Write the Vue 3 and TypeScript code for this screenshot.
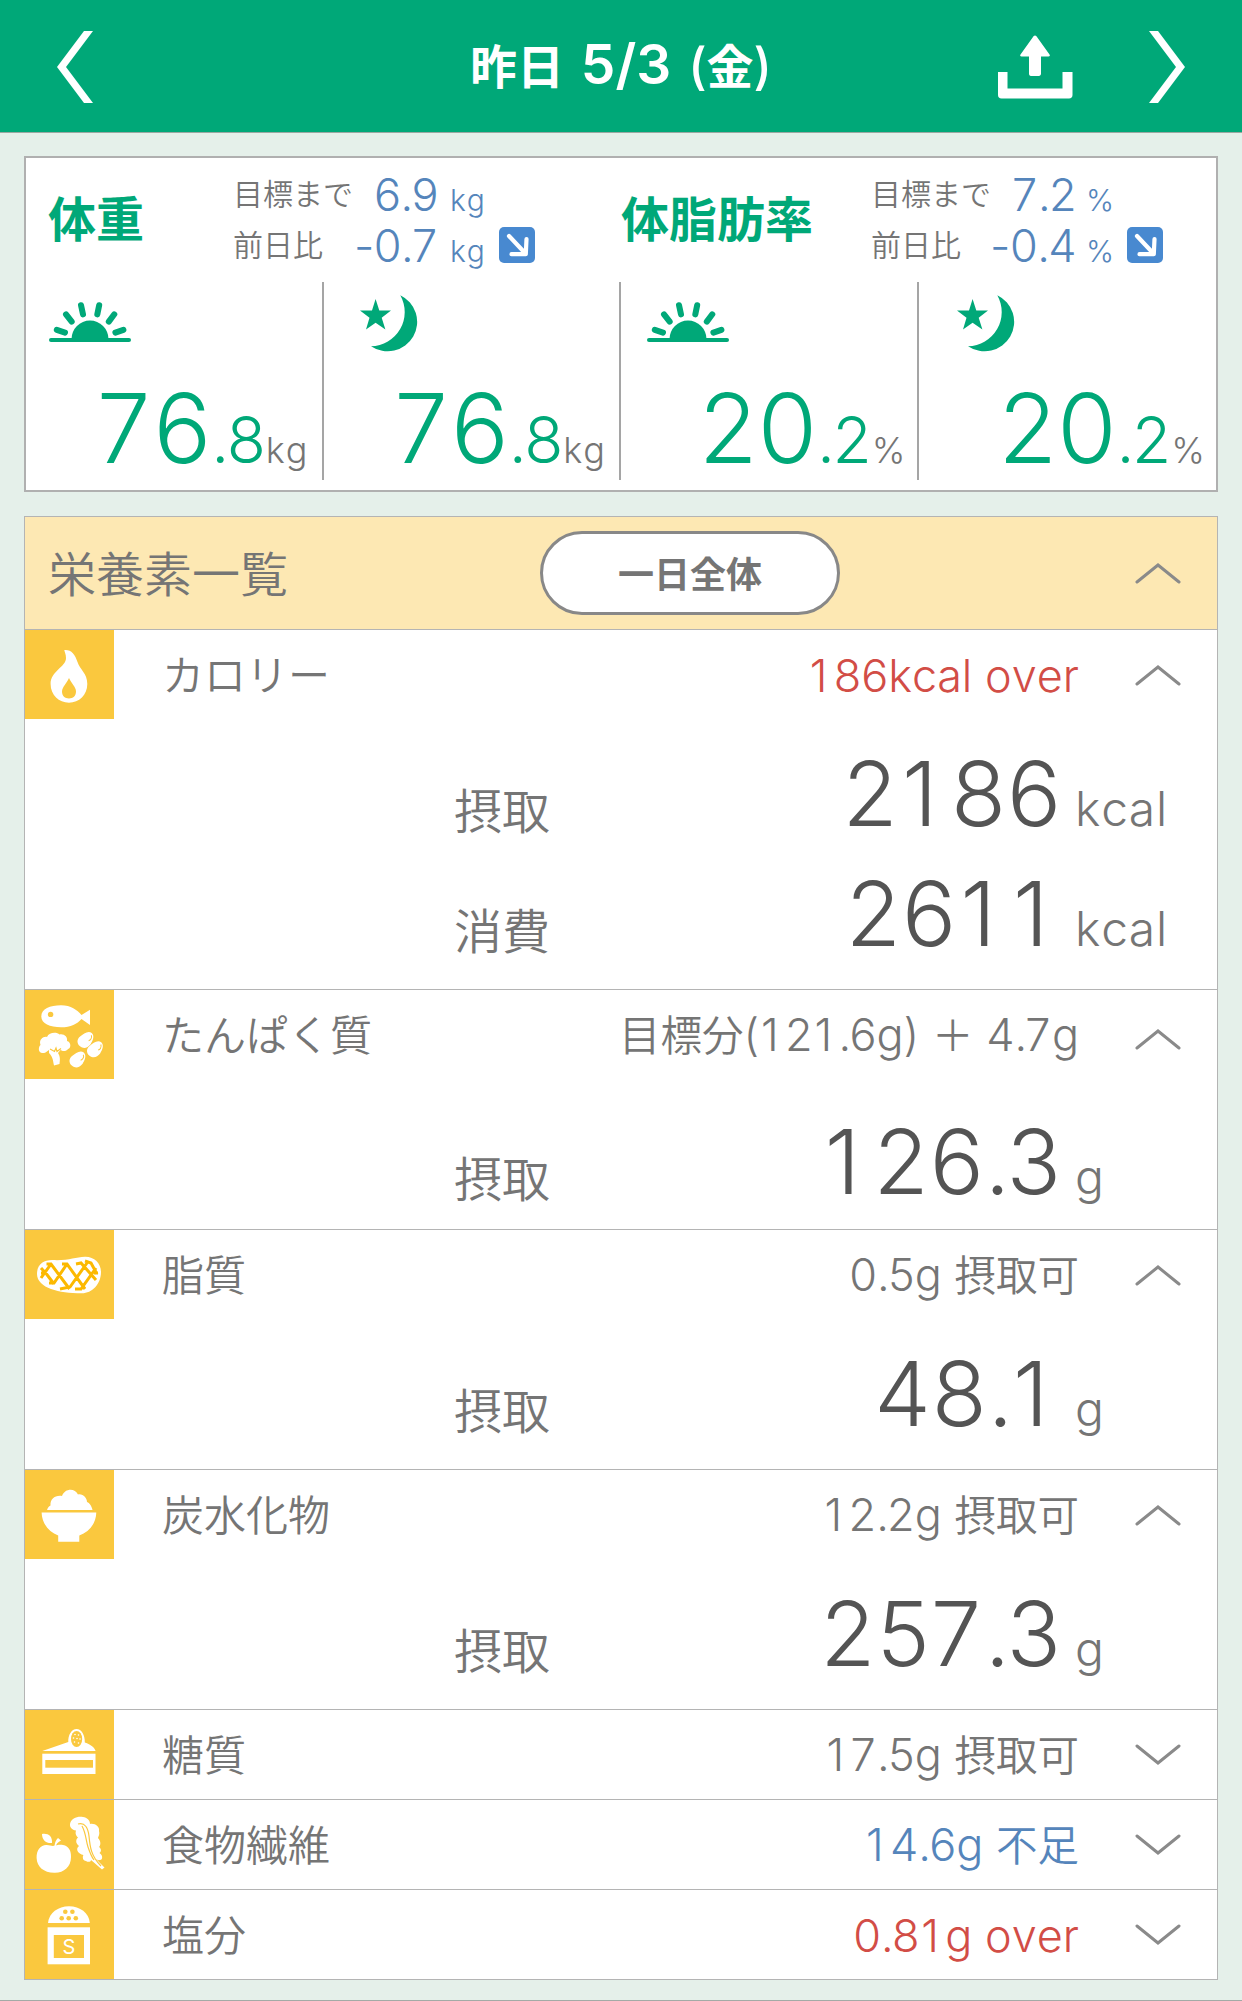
<script setup lang="ts">
interface Metric {
  title: string
  unit: string
  goal: string
  diff: string
  whole: string
  fraction: string
}

interface Intake {
  label: string
  amount: string
  unit: string
}

interface Nutrient {
  icon: string
  name: string
  status: string
  tone: 'plain' | 'over' | 'short'
  open: boolean
  lines: Intake[]
}

interface Run {
  text: string
  kind: 'dot' | 'one' | 'seven' | 'latin' | 'kanji'
}

// Splits a value so points, narrow digits and kanji can be spaced and sized on their own.
function runs(value: string): Run[] {
  const parts = value.match(/[.17]|[\x20-\x2d\x2f\x30\x32-\x36\x38-\x7e]+|[^\x20-\x7e]+/g) ?? []
  return parts.map((text) => {
    if (text === '.') return { text, kind: 'dot' }
    if (text === '1') return { text, kind: 'one' }
    if (text === '7') return { text, kind: 'seven' }
    return { text, kind: /^[\x20-\x7e]/.test(text) ? 'latin' : 'kanji' }
  })
}

const metrics: Metric[] = [
  { title: '体重', unit: 'kg', goal: '6.9', diff: '-0.7', whole: '76', fraction: '.8' },
  { title: '体脂肪率', unit: '%', goal: '7.2', diff: '-0.4', whole: '20', fraction: '.2' },
]

const nutrients: Nutrient[] = [
  {
    icon: 'flame', name: 'カロリー', status: '186kcal over', tone: 'over', open: true,
    lines: [
      { label: '摂取', amount: '2186', unit: 'kcal' },
      { label: '消費', amount: '2611', unit: 'kcal' },
    ],
  },
  { icon: 'protein', name: 'たんぱく質', status: '目標分(121.6g) ＋ 4.7g', tone: 'plain', open: true, lines: [{ label: '摂取', amount: '126.3', unit: 'g' }] },
  { icon: 'fat', name: '脂質', status: '0.5g 摂取可', tone: 'plain', open: true, lines: [{ label: '摂取', amount: '48.1', unit: 'g' }] },
  { icon: 'rice', name: '炭水化物', status: '12.2g 摂取可', tone: 'plain', open: true, lines: [{ label: '摂取', amount: '257.3', unit: 'g' }] },
  { icon: 'cake', name: '糖質', status: '17.5g 摂取可', tone: 'plain', open: false, lines: [] },
  { icon: 'fiber', name: '食物繊維', status: '14.6g 不足', tone: 'short', open: false, lines: [] },
  { icon: 'salt', name: '塩分', status: '0.81g over', tone: 'over', open: false, lines: [] },
]
</script>

<template>
  <div class="page">
    <header class="topbar">
      <svg class="prev" width="36" height="72" viewBox="0 0 36 72"><path d="M27 0H36L9 36L36 72H27L0 36Z" fill="#fff" /></svg>
      <h1 class="date">昨日 <span class="date-num">5/3</span> <span class="paren">(</span>金<span class="paren">)</span></h1>
      <div class="actions">
        <svg class="share" width="76" height="64" viewBox="0 0 76 64">
          <path d="M38 0.5C39 0.5 39.6 1.4 40 2L52.5 19.5C53.3 20.8 52.6 21.5 51.5 21.5H44V38.5C44 40 43.2 41 41.8 41H34C32.6 41 32 40 32 38.5V21.5H24.5C23.4 21.5 22.7 20.8 23.5 19.5L36 2C36.4 1.4 37 0.5 38 0.5Z" fill="#fff" />
          <path d="M1 37H10.5V53.5H65.5V37H75.5V60C75.5 62 74.3 63.5 72 63.5H4.5C2.2 63.5 1 62 1 60Z" fill="#fff" />
        </svg>
        <svg class="next" width="36" height="72" viewBox="0 0 36 72"><path d="M9 0H0L27 36L0 72H9L36 36Z" fill="#fff" /></svg>
      </div>
    </header>

    <main>
      <section class="summary">
        <div v-for="metric in metrics" :key="metric.title" class="metric">
          <div class="metric-head">
            <h2 class="metric-title">{{ metric.title }}</h2>
            <div class="deltas">
              <div class="delta">
                <span class="delta-label">目標まで</span>
                <span class="delta-value"><span v-for="(run, i) in runs(metric.goal)" :key="i" :class="run.kind">{{ run.text }}</span></span>
                <span class="delta-unit" :class="{ percent: metric.unit === '%' }">{{ metric.unit }}</span>
              </div>
              <div class="delta">
                <span class="delta-label">前日比</span>
                <span class="delta-value"><span v-for="(run, i) in runs(metric.diff)" :key="i" :class="run.kind">{{ run.text }}</span></span>
                <span class="delta-unit" :class="{ percent: metric.unit === '%' }">{{ metric.unit }}</span>
                <svg class="trend" width="36" height="36" viewBox="0 0 36 36">
                  <rect width="36" height="36" rx="5" fill="#4889d0" />
                  <path d="M10 9L26 26M27.5 12L26.8 27.2L12.5 27.2" fill="none" stroke="#fff" stroke-width="4.2" stroke-linecap="round" stroke-linejoin="round" />
                </svg>
              </div>
            </div>
          </div>
          <div class="readings">
            <div class="reading">
              <svg class="sunrise" width="82" height="58" viewBox="0 0 82 58">
                <path d="M22.5 44A18.3 18.3 0 0 1 59.5 44Z" fill="#00a878" />
                <rect x="0" y="43" width="82" height="4" rx="2" fill="#00a878" />
                <path d="M7.8 34.8L16 37.6M17 19.3L22.7 26.6M32 10.2L34 19.4M50.2 10.2L48.3 19.4M65.3 19.3L59.8 26.6M74.4 34.8L66.4 37.6" stroke="#00a878" stroke-width="6" stroke-linecap="round" />
              </svg>
              <p class="figure">
                <span class="whole"><span v-for="(run, i) in runs(metric.whole)" :key="i" :class="run.kind">{{ run.text }}</span></span><span class="fraction"><span v-for="(run, i) in runs(metric.fraction)" :key="i" :class="run.kind">{{ run.text }}</span></span><span class="unit">{{ metric.unit }}</span>
              </p>
            </div>
            <div class="reading night">
              <svg class="moon" width="60" height="58" viewBox="0 0 60 58">
                <path d="M15.6 4L19.3 15.4H31L21.7 22.8L25.4 34.6L15.6 27.8L6 34.6L9.5 22.8L0 15.4H12Z" fill="#00a878" />
                <path d="M40.3 0.2A29.5 29.5 0 1 1 11 51.2A34.2 34.2 0 0 0 40.3 0.2Z" fill="#00a878" />
              </svg>
              <p class="figure">
                <span class="whole"><span v-for="(run, i) in runs(metric.whole)" :key="i" :class="run.kind">{{ run.text }}</span></span><span class="fraction"><span v-for="(run, i) in runs(metric.fraction)" :key="i" :class="run.kind">{{ run.text }}</span></span><span class="unit">{{ metric.unit }}</span>
              </p>
            </div>
          </div>
        </div>
      </section>

      <section class="nutrition">
        <div class="list-head">
          <h2 class="list-title">栄養素一覧</h2>
          <button class="range" type="button">一日全体</button>
          <svg class="chevron" width="46" height="22" viewBox="0 0 46 22"><path d="M2 20L23 3L44 20" /></svg>
        </div>

        <article v-for="item in nutrients" :key="item.name" class="nutrient" :class="item.icon">
          <div class="row">
            <svg class="tile" width="89" height="89" viewBox="0 0 89 89">
              <rect width="89" height="89" fill="#fac83e" />
              <g v-if="item.icon === 'flame'">
                <path d="M39.3 20C46 19.3 50 24 52.5 32C55 40 62.3 43 62.3 54C62.3 65 54 72.7 44 72.7C34 72.7 25.6 65 25.6 54C25.6 41 41 37 41 28C41 24 39.5 22 39.3 20Z" fill="#fff" />
                <path d="M44 48C46 53 51 57 51 61.5C51 66 48 68.4 44 68.4C40 68.4 37 66 37 61.5C37 57 42 53 44 48Z" fill="#fac83e" />
              </g>
              <g v-else-if="item.icon === 'protein'" fill="#fff">
                <path d="M16.3 26.5C16.3 19 25 15.3 36 15.3C46 15.3 52 20 56.5 25L65 19.7V35L56.5 29C52 34 46 37.3 36 37.3C25 37.3 16.3 33.5 16.3 26.5Z" />
                <circle cx="25.6" cy="24.4" r="2.7" fill="#fac83e" />
                <path d="M15 62C13 60 14 56 15.5 55C13.5 49 19 46 22 47C24 42 32 42 34.5 44.5C39 43.5 43 47 42 51C46 52 46.5 58 43 59C41 62 37 61 35.5 60L33 63C35.5 67 35 70 34.5 74L29 75.5C28 71 28 67 24 63L24 60L20.5 62.5C18 63.5 16 63 15 62Z" />
                <path d="M25 59L29.5 61.5L31 58L32 61.5L36 58.5" fill="none" stroke="#fac83e" stroke-width="1.2" />
                <g v-for="[x, y] in [[60.5, 50.2], [70, 59.5], [52.5, 69.7]]" :key="x" :transform="`translate(${x} ${y}) rotate(38)`">
                  <path d="M0.5 -9.5C5 -9 6 -4 6.5 0C6.5 5 4 8.2 -0.5 8.2C-5 8.2 -7.5 4.5 -6.5 0.5C-5.5 -4 -4 -9.5 0.5 -9.5Z" />
                  <path d="M1.5 -7.5C4 -6 4 -3 2.8 -1.5" fill="none" stroke="#fac83e" stroke-width="1" />
                </g>
              </g>
              <g v-else-if="item.icon === 'fat'">
                <path d="M12 44C12 34 19 30 27 30C43 31 50 27 60 26.7C69 26.5 76 33 76 42C76 54 67 63.3 57 63.3C44 63.3 35 62 26 59C18 56 12 51 12 44Z" fill="#fff" />
                <path d="M16 38L21.5 44L29 54M16 48L26 34M21.5 34H26L44.5 59M24 53H29L42 34M37 34H42L60 59M35 59L45 57L62 33M51 34L56 33L71 50M50 59H56L71 38M60 31L66 33L72 44M16 43H19M69 43H73" fill="none" stroke="#fcb900" stroke-width="3" />
              </g>
              <g v-else-if="item.icon === 'rice'" fill="#fff">
                <path d="M22 40C23 37 24.5 36 25.5 35.5C25 29 30 25 37 26C40 18 50 18 53 24.5C58 23.5 62 28 62 32C65 33 67 37 67.5 40Z" />
                <path d="M16.6 42.5H71.3C71 54 64 62 54.3 65.5V71.7H33.2V65.5C24 62 17 54 16.6 42.5Z" />
              </g>
              <g v-else-if="item.icon === 'cake'" fill="#fff">
                <path d="M17.3 41L43.3 32C43 25 46.5 19 51.6 19C56.5 19 60 25 59.8 32.5C66 34.5 69.5 37.5 70.6 41Z" />
                <ellipse cx="51.6" cy="29" rx="5.6" ry="8" fill="#fac83e" />
                <g><circle v-for="[x, y] in [[50, 24.5], [53.5, 25], [48.5, 28], [52, 28.5], [55, 29], [49.5, 32], [53.5, 33]]" :key="`${x}-${y}`" :cx="x" :cy="y" r="0.8" /></g>
                <rect x="17.3" y="43.7" width="53.2" height="20.3" />
                <rect x="20.3" y="50" width="47.7" height="7.7" fill="#fac83e" />
              </g>
              <g v-else-if="item.icon === 'fiber'" fill="#fff">
                <path d="M28 46C31 45.5 34 44.5 38 45C44 46 46.2 51 46 57C46 67 39 72.7 30 72.7C19 73 12 67 11.6 58C11.3 50 16 45 21 45C24 44.8 26 46 28 46Z" />
                <path d="M17 34C23 33 27.5 36 27 43C21 43.5 17 40 17 34Z" />
                <path d="M29.5 46C30 42 31 40 33 38L36 40.5C33 42 31.5 43.5 31 46Z" />
                <path d="M45 24C46 18 53 16 58 17C62 17.5 65 20 65 24C70 23 75 27 74 31C75 34 73.5 36 73 38C76 41 76 45 74 47C77 49 76 52 74.5 53C78 55 78 60 75 60C73 60.5 72 59.5 71 59L79.5 67.5L77 69.5L66 60C66 62 63 62.5 61 61C58 61 57 57 58.5 55C53 54 50 49 54 46C50 43 51 39 53 37.5C50 35 50.5 32 51 30.5C47 30 44.5 27 45 24Z" />
                <path d="M53 24C60 22 63 28 64 36C65 47 66 56 76 66M57 26C61 33 61 41 63 47C65 53 66 56 69 60" fill="none" stroke="#fac83e" stroke-width="1.2" />
              </g>
              <g v-else fill="#fff">
                <path d="M23 33C24 23 33 16.3 44 16.3C55 16.3 64 23 64.8 33Z" />
                <g fill="#fac83e"><circle cx="40.3" cy="21.8" r="2.3" /><circle cx="47.4" cy="21.8" r="2.3" /><circle cx="36.7" cy="28.2" r="2.3" /><circle cx="43.7" cy="28.2" r="2.3" /><circle cx="50.8" cy="28.2" r="2.3" /></g>
                <rect x="22.6" y="37.3" width="42.4" height="37" />
                <rect x="28.8" y="45" width="30.2" height="23" fill="#fac83e" />
                <text x="43.8" y="64" text-anchor="middle" font-size="20" font-weight="400" font-family="Inter, sans-serif">S</text>
              </g>
            </svg>
            <h3 class="name">{{ item.name }}</h3>
            <span class="status" :class="item.tone"><span v-for="(run, i) in runs(item.status)" :key="i" :class="run.kind">{{ run.text }}</span></span>
            <svg class="chevron" width="46" height="22" viewBox="0 0 46 22"><path :d="item.open ? 'M2 20L23 3L44 20' : 'M2 2L23 19L44 2'" /></svg>
          </div>
          <div v-for="line in item.lines" :key="line.label" class="intake">
            <span class="intake-label">{{ line.label }}</span>
            <span class="amount"><span v-for="(run, i) in runs(line.amount)" :key="i" :class="run.kind">{{ run.text }}</span></span>
            <span class="intake-unit">{{ line.unit }}</span>
          </div>
        </article>
      </section>
    </main>
  </div>
</template>

<style>
body {
  margin: 0;
  background: #e5f0ea;
}
</style>

<style scoped>
.page {
  box-sizing: border-box;
  width: 1242px;
  height: 2001px;
  overflow: hidden;
  background: #e5f0ea;
  border-bottom: 1px solid #a3aaa6;
  color: #757575;
  font-family: Inter, "Noto Sans CJK JP", sans-serif;
  font-weight: 350;
  font-kerning: none;
}

h1, h2, h3, p {
  margin: 0;
  font-weight: inherit;
}

.dot {
  letter-spacing: -0.04em;
}

.one {
  margin-right: 0.14em;
  margin-left: 0.04em;
}

.seven {
  margin-right: 0.03em;
}

.topbar {
  box-sizing: border-box;
  display: grid;
  grid-template-columns: 1fr auto 1fr;
  align-items: center;
  height: 133px;
  padding: 0 57px 1px;
  background: #00a878;
  border-bottom: 1px solid #9aa8a2;
  color: #fff;
}

.date {
  padding-bottom: 3px;
  font-size: 47px;
  line-height: 128px;
  font-weight: 600;
  white-space: pre;
  word-spacing: 5px;
}

.date-num {
  font-size: 55px;
}

.paren {
  font-size: 50px;
  font-weight: 500;
}

.actions {
  display: flex;
  justify-content: flex-end;
  align-items: center;
  gap: 76px;
}

main {
  display: flex;
  flex-direction: column;
  gap: 24px;
  padding: 23px 24px 0;
}

.summary {
  box-sizing: border-box;
  display: flex;
  height: 336px;
  border: 2px solid #b0b0b0;
  background: #fff;
}

.metric {
  width: 50%;
}

.metric-head {
  box-sizing: border-box;
  display: flex;
  height: 124px;
  padding: 11px 0 0 22px;
}

.metric-title {
  width: 185px;
  color: #00a878;
  font-size: 48px;
  line-height: 102px;
  font-weight: 700;
}

.metric + .metric .metric-title {
  width: 250px;
}

.metric + .metric .metric-head {
  padding-left: 0;
}

.delta {
  display: flex;
  align-items: baseline;
  height: 51px;
  line-height: 51px;
}

.delta-label {
  align-self: flex-start;
  width: 119px;
  font-size: 30px;
  white-space: nowrap;
}

.delta-value {
  width: 86px;
  color: #5585bb;
  font-size: 45px;
  letter-spacing: -0.5px;
  text-align: right;
  white-space: nowrap;
}

.delta-unit {
  margin-left: 12px;
  color: #5585bb;
  font-size: 30px;
  letter-spacing: 0.8px;
}

.delta-unit.percent {
  margin-left: 10px;
  letter-spacing: 0;
}

.trend {
  align-self: flex-start;
  margin-top: 7px;
  margin-left: 13px;
}

.readings {
  display: flex;
  height: 198px;
}

.reading {
  box-sizing: border-box;
  width: 50%;
  padding: 13px 13px 0 23px;
  border-right: 2px solid #a5a5a5;
}

.reading.night {
  padding-left: 36px;
}

.metric + .metric .reading {
  padding-right: 10px;
  padding-left: 26px;
}

.metric + .metric .reading.night {
  padding-left: 38px;
  border-right: 0;
}

.sunrise, .moon {
  display: block;
}

.figure {
  display: flex;
  justify-content: flex-end;
  align-items: baseline;
  margin-top: 17px;
  color: #00a878;
  line-height: 116px;
}

.whole {
  font-size: 96px;
}

.fraction {
  font-size: 64px;
}

.unit {
  color: #757575;
  font-size: 36px;
  letter-spacing: 1px;
}

.nutrition {
  box-sizing: border-box;
  height: 1464px;
  border: 1px solid #b4b4b4;
  background: #fff;
}

.list-head {
  display: flex;
  align-items: center;
  height: 112px;
  padding: 0 36px 0 23px;
  background: #fde8b3;
  border-bottom: 1px solid #b4b4b4;
}

.list-title {
  width: 492px;
  padding-bottom: 5px;
  font-size: 48px;
}

.range {
  box-sizing: border-box;
  width: 300px;
  height: 84px;
  padding: 0 0 2px;
  border: 3px solid #888;
  border-radius: 42px;
  background: #fff;
  color: #757575;
  font: 600 36px Inter, "Noto Sans CJK JP", sans-serif;
}

.chevron {
  flex: none;
  margin-left: auto;
  fill: none;
  stroke: #8a8a8a;
  stroke-width: 3;
  stroke-linecap: round;
}

.nutrient {
  box-sizing: border-box;
  border-bottom: 1px solid #b4b4b4;
}

.nutrient:last-child {
  border-bottom: 0;
}

.row {
  display: flex;
  align-items: center;
  height: 89px;
  padding-right: 36px;
}

.tile {
  flex: none;
}

.name {
  margin-left: 48px;
  padding-top: 3px;
  font-size: 42px;
  line-height: 86px;
}

.status {
  margin-left: auto;
  padding-top: 2px;
  font-size: 45px;
  line-height: 87px;
  white-space: pre;
}

.status .kanji {
  font-size: 41.5px;
}

.row .chevron {
  margin-top: 1px;
  margin-left: 56px;
}

.protein .row .chevron {
  margin-top: 9px;
}

.over {
  color: #d24d46;
}

.short {
  color: #5585bb;
}

.intake {
  box-sizing: border-box;
  display: flex;
  align-items: baseline;
  height: 120px;
  padding-top: 15px;
  line-height: 120px;
}

.intake:last-child {
  height: 150px;
}

.protein .intake {
  padding-top: 23px;
}

.intake-label {
  align-self: flex-start;
  width: 180px;
  margin-left: 429px;
  font-size: 48px;
  line-height: 156px;
}

.amount {
  width: 428px;
  color: #545454;
  font-size: 90px;
  letter-spacing: 0.01em;
  text-align: right;
}

.intake-unit {
  margin-left: 13px;
  font-size: 48px;
  letter-spacing: 0.8px;
}
</style>
